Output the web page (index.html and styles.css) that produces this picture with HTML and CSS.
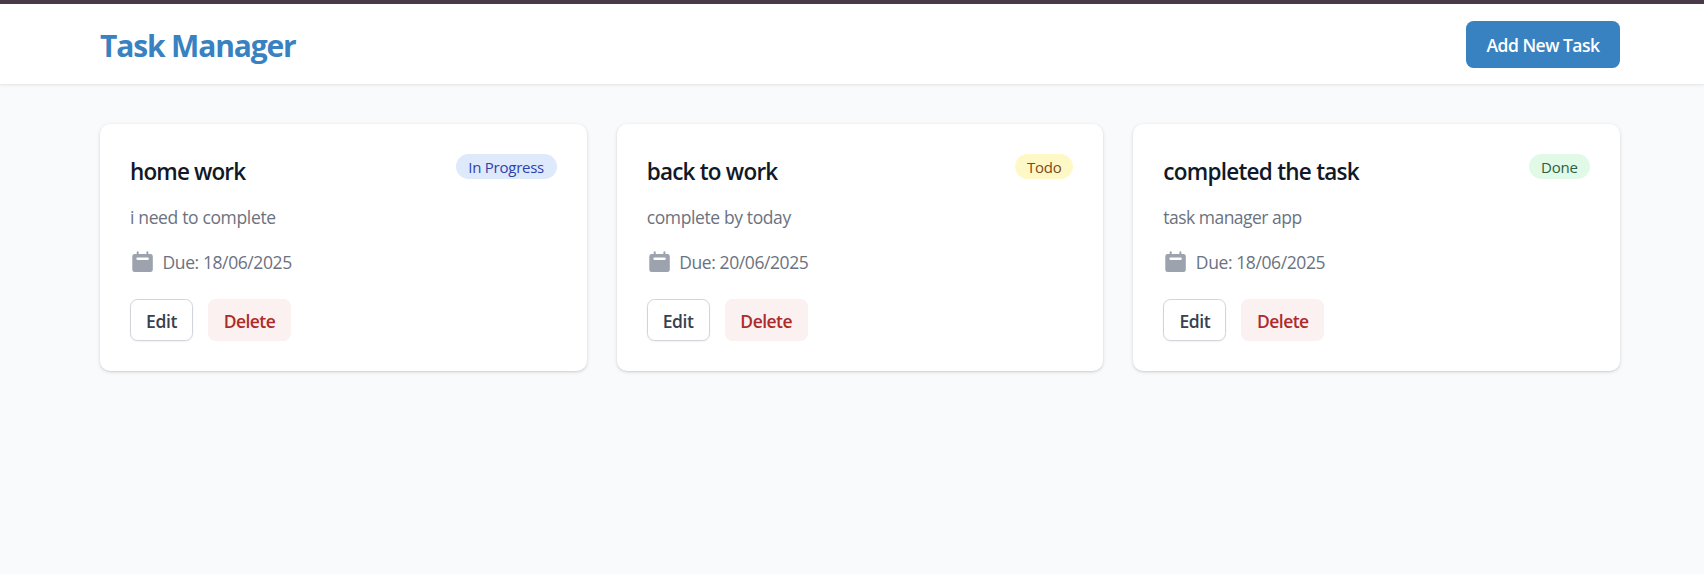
FILE: index.html
```html
<!DOCTYPE html>
<html lang="en">
<head>
<meta charset="utf-8">
<title>Task Manager</title>
<link rel="stylesheet" href="styles.css">
</head>
<body>
<svg width="0" height="0" class="sprite" aria-hidden="true">
  <symbol id="calendar" viewBox="0 0 25 25">
    <path fill-rule="evenodd" d="M6.7 2.3a1 1 0 0 1 2 0V4h7.700V2.300a1 1 0 0 1 2 0V4h2.100A2.300 2.300 0 0 1 22.800 6.300v13.400A2.300 2.300 0 0 1 20.500 22H4.600A2.300 2.300 0 0 1 2.300 19.700V6.300A2.300 2.300 0 0 1 4.600 4h2.100zM7.500 7.600a1.150 1.150 0 0 0 0 2.300h10.200a1.150 1.150 0 0 0 0-2.300z"/>
  </symbol>
</svg>
<header class="header">
  <h1 class="brand">Task Manager</h1>
  <button class="add-button">Add New Task</button>
</header>
<main class="grid">
  <article class="card">
    <div class="card-head"><h2 class="card-title home">home work</h2><span class="badge progress">In Progress</span></div>
    <p class="description need">i need to complete</p>
    <div class="due"><svg class="icon"><use href="#calendar"/></svg><span>Due: 18/06/2025</span></div>
    <div class="actions"><button class="edit">Edit</button><button class="delete">Delete</button></div>
  </article>
  <article class="card">
    <div class="card-head"><h2 class="card-title back">back to work</h2><span class="badge todo">Todo</span></div>
    <p class="description today">complete by today</p>
    <div class="due"><svg class="icon"><use href="#calendar"/></svg><span>Due: 20/06/2025</span></div>
    <div class="actions"><button class="edit">Edit</button><button class="delete">Delete</button></div>
  </article>
  <article class="card">
    <div class="card-head"><h2 class="card-title completed">completed the task</h2><span class="badge done">Done</span></div>
    <p class="description app">task manager app</p>
    <div class="due"><svg class="icon"><use href="#calendar"/></svg><span>Due: 18/06/2025</span></div>
    <div class="actions"><button class="edit">Edit</button><button class="delete">Delete</button></div>
  </article>
</main>
</body>
</html>
```
FILE: styles.css
```css
* { box-sizing: border-box; margin: 0; }
body {
  min-height: 574px;
  border-top: 4px solid #483a48;
  background: #f9fafc;
  font-family: "Open Sans", "Noto Sans", sans-serif;
  font-size: 17.5px;
  line-height: 25px;
}
.sprite { display: block; }
button { font: inherit; border: 0; padding: 2px 0 0; white-space: nowrap; }
.header {
  display: flex;
  align-items: center;
  justify-content: space-between;
  height: 80px;
  padding: 0 84px 0 100px;
  background: #fff;
  box-shadow: 0 1px 3px rgba(0, 0, 0, .1);
}
.brand { padding-top: 3px; font-size: 30px; line-height: 40px; font-weight: 700; color: #3882c1; letter-spacing: -1.15px; }
.add-button { width: 154px; height: 47px; border-radius: 7.5px; background: #3882c1; color: #fff; font-weight: 600; letter-spacing: -.52px; }
.grid { display: grid; grid-template-columns: repeat(3, 1fr); gap: 30px; padding: 40px 84px 0 100px; }
.card { height: 247px; padding: 30px; border-radius: 10px; background: #fff; box-shadow: 0 1px 4px rgba(0, 0, 0, .1), 0 1px 2px rgba(0, 0, 0, .1); }
.card-head { display: flex; justify-content: space-between; align-items: flex-start; height: 51px; }
.card-title { padding-top: 2px; font-size: 22.5px; line-height: 32px; font-weight: 600; color: #111827; }
.home { letter-spacing: -.86px; }
.back { letter-spacing: -.78px; }
.completed { letter-spacing: -.75px; }
.badge { display: flex; justify-content: center; height: 25px; border-radius: 13px; font-size: 15px; line-height: 26px; font-weight: 500; }
.progress { width: 101px; background: #dee9fc; color: #2c42ad; letter-spacing: -.25px; }
.todo { width: 58px; background: #fef8c7; color: #7d4b19; letter-spacing: -.2px; }
.done { width: 61px; background: #e1fae8; color: #2b6040; letter-spacing: -.2px; }
.description { height: 45px; color: #6b7280; }
.need { letter-spacing: -.35px; }
.today { letter-spacing: -.38px; }
.app { letter-spacing: -.52px; }
.due { display: flex; align-items: center; gap: 7.5px; height: 25px; margin-bottom: 24px; color: #6b7280; letter-spacing: -.4px; }
.icon { width: 25px; height: 25px; fill: #9ca3af; }
.actions { display: flex; gap: 15px; }
.edit, .delete { height: 42px; border-radius: 7.5px; font-weight: 600; }
.edit { width: 63px; border: 1px solid #d1d5db; background: #fff; color: #374151; box-shadow: 0 1px 2px rgba(0, 0, 0, .05); letter-spacing: -.4px; }
.delete { width: 83px; background: #fcf1f1; color: #ad2b2b; letter-spacing: -.55px; }
```
